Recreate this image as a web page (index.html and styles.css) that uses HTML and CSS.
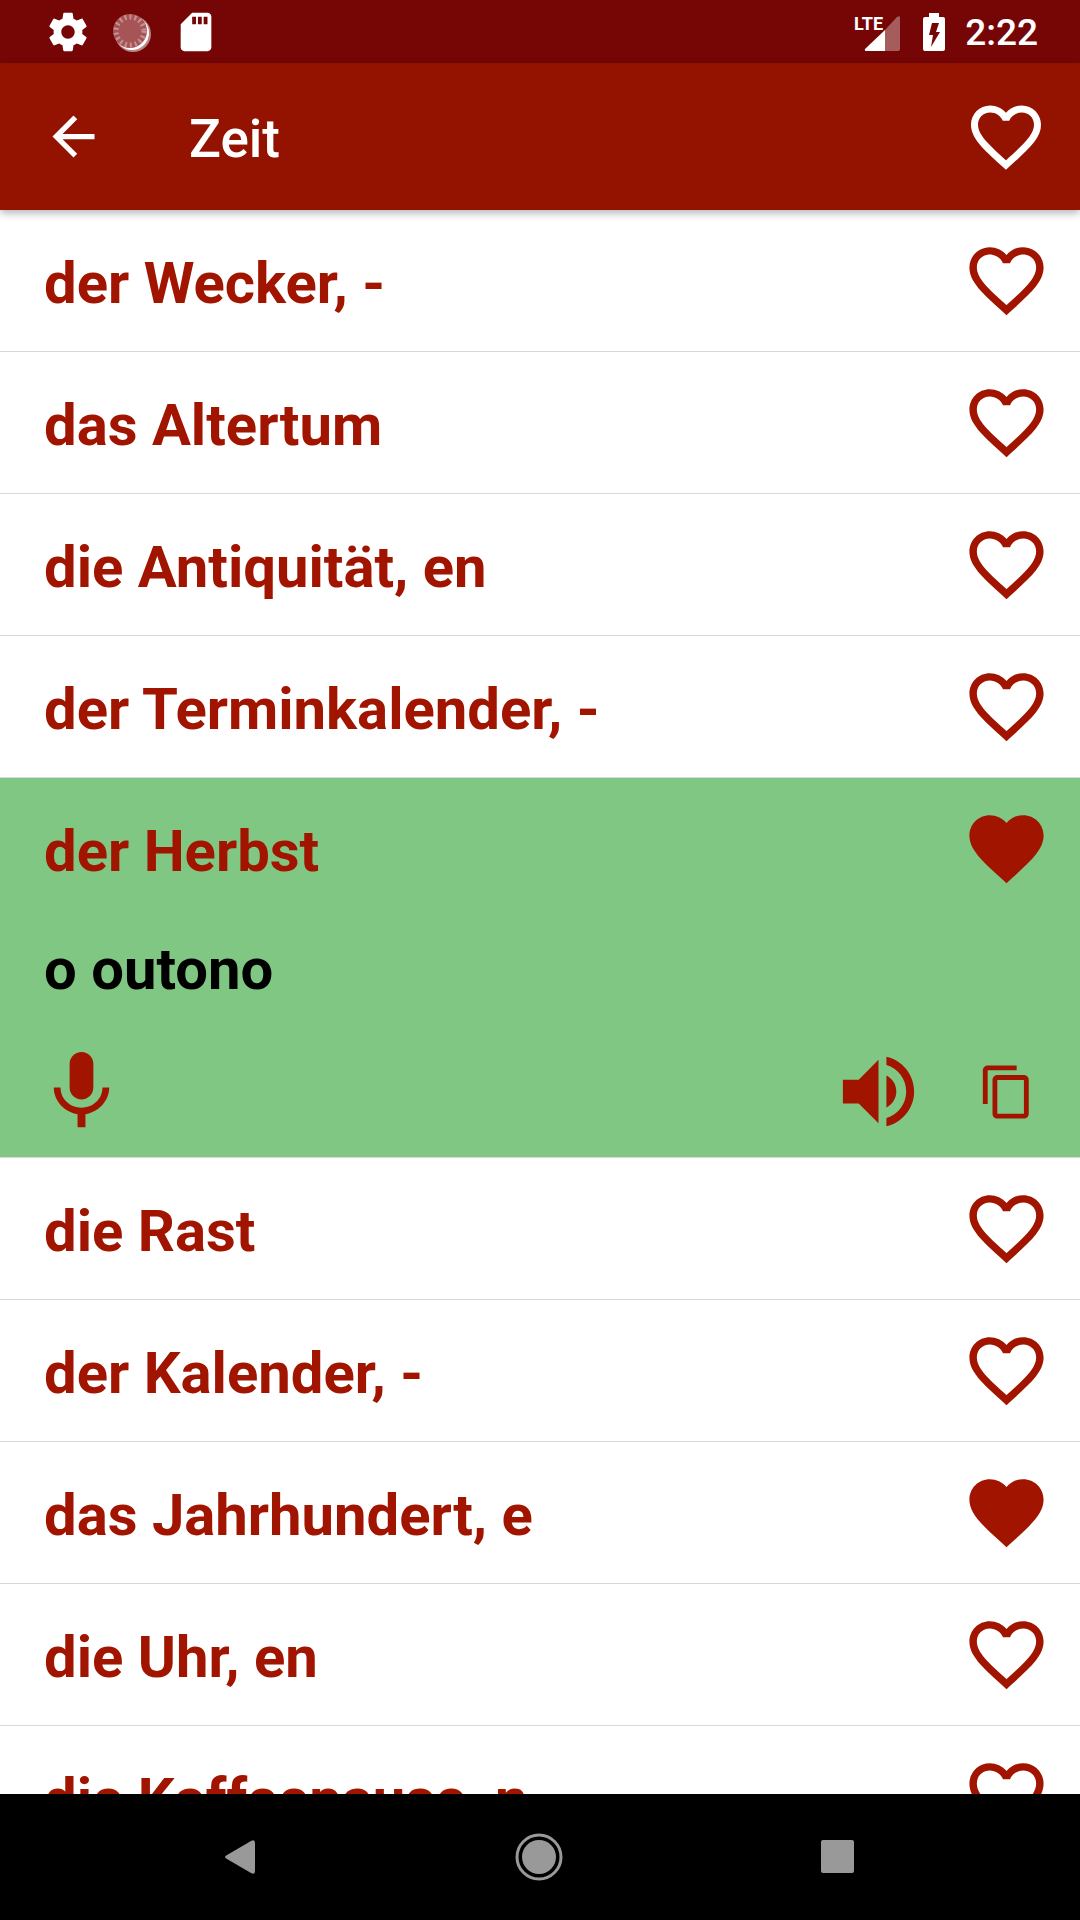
FILE: index.html
```html
<!DOCTYPE html>
<html lang="de">
<head>
<meta charset="utf-8">
<meta name="viewport" content="width=device-width, initial-scale=1">
<title>Zeit</title>
<link rel="stylesheet" href="styles.css">
</head>
<body>
<svg class="symbols" aria-hidden="true">
  <symbol id="heart-outline" viewBox="0 0 24 24"><path d="M16.5 3c-1.74 0-3.41.81-4.5 2.09C10.91 3.81 9.24 3 7.5 3 4.42 3 2 5.42 2 8.5c0 3.78 3.4 6.86 8.55 11.54L12 21.35l1.45-1.32C18.6 15.36 22 12.28 22 8.5 22 5.42 19.58 3 16.5 3zm-4.4 15.55l-.1.1-.1-.1C7.14 14.24 4 11.39 4 8.5 4 6.5 5.5 5 7.5 5c1.54 0 3.04.99 3.57 2.36h1.87C13.46 5.99 14.96 5 16.5 5c2 0 3.5 1.5 3.5 3.5 0 2.89-3.14 5.74-7.9 10.05z"/></symbol>
  <symbol id="heart" viewBox="0 0 24 24"><path d="M12 21.35l-1.45-1.32C5.4 15.36 2 12.28 2 8.5 2 5.42 4.42 3 7.5 3c1.74 0 3.41.81 4.5 2.09C13.09 3.81 14.76 3 16.5 3 19.58 3 22 5.42 22 8.5c0 3.78-3.4 6.86-8.55 11.54L12 21.35z"/></symbol>
</svg>
<div class="screen">
  <div class="status">
    <div class="status-group">
      <svg class="status-icon" viewBox="0 0 24 24" aria-hidden="true"><path d="M19.43 12.98c.04-.32.07-.64.07-.98s-.03-.66-.07-.98l2.11-1.65c.19-.15.24-.42.12-.64l-2-3.46c-.12-.22-.39-.3-.61-.22l-2.49 1c-.52-.4-1.08-.73-1.69-.98l-.38-2.65C14.46 2.18 14.25 2 14 2h-4c-.25 0-.46.18-.49.42l-.38 2.65c-.61.25-1.17.59-1.69.98l-2.49-1c-.23-.09-.49 0-.61.22l-2 3.46c-.13.22-.07.49.12.64l2.11 1.65c-.04.32-.07.65-.07.98s.03.66.07.98l-2.11 1.65c-.19.15-.24.42-.12.64l2 3.46c.12.22.39.3.61.22l2.49-1c.52.4 1.08.73 1.69.98l.38 2.65c.03.24.24.42.49.42h4c.25 0 .46-.18.49-.42l.38-2.65c.61-.25 1.17-.59 1.69-.98l2.49 1c.23.09.49 0 .61-.22l2-3.46c.12-.22.07-.49-.12-.64l-2.11-1.65zM12 15.5c-1.93 0-3.500-1.570-3.500-3.500s1.570-3.500 3.500-3.500 3.500 1.570 3.500 3.500-1.570 3.500-3.500 3.500z"/></svg>
      <svg class="status-icon" viewBox="0 0 46 46" aria-hidden="true">
        <circle cx="24" cy="25" r="18" opacity=".5"/>
        <circle cx="23" cy="24" r="17"/>
        <circle cx="21" cy="22" r="17" fill="#a65456"/>
        <circle class="dial" cx="21" cy="22" r="14"/>
      </svg>
      <svg class="status-icon" viewBox="0 0 24 24" aria-hidden="true"><path d="M18 2h-8L4.020 8 4 20c0 1.100.9 2 2 2h12c1.100 0 2-.9 2-2V4c0-1.100-.9-2-2-2zm-6 6h-2V4h2v4zm3 0h-2V4h2v4zm3 0h-2V4h2v4z"/></svg>
    </div>
    <div class="status-group">
      <svg class="signal" viewBox="0 0 48 46" aria-hidden="true">
        <path d="M46 9v31a2 2 0 0 1-2 2H31V21L43 8q3-2 3 1z" opacity=".35"/>
        <path d="M31 21v21H13q-3 0-2-2z"/>
        <text class="lte" x="0" y="21">LTE</text>
      </svg>
      <svg class="battery" viewBox="0 0 27 46" aria-hidden="true"><path fill-rule="evenodd" d="M9 4h10v4h4q2 0 2 2v30q0 2-2 2H5q-2 0-2-2V10q0-2 2-2h4zM12 14L9 26h4l-2 12 9-15h-4l3-9z"/></svg>
      <time class="clock">2:22</time>
    </div>
  </div>
  <header class="appbar">
    <button class="back" aria-label="Zurück"><svg viewBox="0 0 24 24"><path d="M20 11H7.830l5.590-5.590L12 4l-8 8 8 8 1.410-1.410L7.830 13H20v-2z"/></svg></button>
    <h1 class="title">Zeit</h1>
    <button class="appbar-fav" aria-label="Favoriten"><svg><use href="#heart-outline"/></svg></button>
  </header>
  <ul class="list">
    <li class="item"><div class="row"><span class="word">der Wecker, -</span><button class="fav" aria-label="Favorit"><svg><use href="#heart-outline"/></svg></button></div></li>
    <li class="item"><div class="row"><span class="word">das Altertum</span><button class="fav" aria-label="Favorit"><svg><use href="#heart-outline"/></svg></button></div></li>
    <li class="item"><div class="row"><span class="word">die Antiquität, en</span><button class="fav" aria-label="Favorit"><svg><use href="#heart-outline"/></svg></button></div></li>
    <li class="item"><div class="row"><span class="word">der Terminkalender, -</span><button class="fav" aria-label="Favorit"><svg><use href="#heart-outline"/></svg></button></div></li>
    <li class="item item-open">
      <div class="row"><span class="word">der Herbst</span><button class="fav" aria-label="Favorit"><svg><use href="#heart"/></svg></button></div>
      <p class="word translation" lang="pt">o outono</p>
      <div class="tools">
        <button class="tool" aria-label="Aufnehmen"><svg viewBox="0 0 24 24"><path d="M12 14c1.660 0 2.990-1.340 2.990-3L15 5c0-1.660-1.340-3-3-3S9 3.340 9 5v6c0 1.660 1.340 3 3 3zm5.300-3c0 3-2.540 5.100-5.300 5.100S6.700 14 6.700 11H5c0 3.410 2.720 6.230 6 6.720V21h2v-3.280c3.280-.48 6-3.300 6-6.720h-1.700z"/></svg></button>
        <button class="tool tool-sound" aria-label="Anhören"><svg viewBox="0 0 24 24"><path d="M3 9v6h4l5 5V4L7 9H3zm13.500 3c0-1.770-1.020-3.290-2.500-4.030v8.050c1.480-.73 2.500-2.250 2.500-4.020zM14 3.230v2.060c2.890.86 5 3.540 5 6.710s-2.110 5.850-5 6.710v2.060c4.010-.91 7-4.490 7-8.770s-2.990-7.860-7-8.770z"/></svg></button>
        <button class="tool tool-copy" aria-label="Kopieren"><svg viewBox="0 0 24 24"><path d="M16 1H4c-1.100 0-2 .9-2 2v14h2V3h12V1zm3 4H8c-1.100 0-2 .9-2 2v14c0 1.100.9 2 2 2h11c1.100 0 2-.9 2-2V7c0-1.100-.9-2-2-2zm0 16H8V7h11v14z"/></svg></button>
      </div>
    </li>
    <li class="item"><div class="row"><span class="word">die Rast</span><button class="fav" aria-label="Favorit"><svg><use href="#heart-outline"/></svg></button></div></li>
    <li class="item"><div class="row"><span class="word">der Kalender, -</span><button class="fav" aria-label="Favorit"><svg><use href="#heart-outline"/></svg></button></div></li>
    <li class="item"><div class="row"><span class="word">das Jahrhundert, e</span><button class="fav" aria-label="Favorit"><svg><use href="#heart"/></svg></button></div></li>
    <li class="item"><div class="row"><span class="word">die Uhr, en</span><button class="fav" aria-label="Favorit"><svg><use href="#heart-outline"/></svg></button></div></li>
    <li class="item"><div class="row"><span class="word">die Kaffeepause, n</span><button class="fav" aria-label="Favorit"><svg><use href="#heart-outline"/></svg></button></div></li>
  </ul>
  <nav class="navbar">
    <button aria-label="Zurück"><svg viewBox="0 0 48 48"><path d="M11 22L35 8q4-2 4 2v28q0 4-4 2L11 26q-4-2 0-4z"/></svg></button>
    <button aria-label="Startseite"><svg viewBox="0 0 48 48"><circle class="ring" cx="24" cy="24" r="22"/><circle cx="24" cy="24" r="17"/></svg></button>
    <button aria-label="Übersicht"><svg viewBox="0 0 48 48"><rect x="7" y="7" width="33" height="33" rx="2"/></svg></button>
  </nav>
</div>
</body>
</html>
```

FILE: styles.css
```css
* { box-sizing: border-box; }

body {
  margin: 0;
  font-family: Roboto, "Noto Sans", sans-serif;
  background: #fff;
  color: #a11400;
}

button {
  display: flex;
  align-items: center;
  justify-content: center;
  padding: 0;
  border: 0;
  background: none;
  color: inherit;
  cursor: pointer;
}

svg {
  display: block;
  fill: currentColor;
}

.symbols {
  position: absolute;
  width: 0;
  height: 0;
}

.screen {
  display: flex;
  flex-direction: column;
  height: 100vh;
}

/* System status bar */
.status {
  display: flex;
  flex: none;
  align-items: center;
  justify-content: space-between;
  height: 63px;
  padding: 0 42px 0 45px;
  background: #760606;
  color: #fff;
}

.status-group {
  display: flex;
  align-items: center;
  gap: 18px;
}

.status-icon {
  width: 46px;
  height: 46px;
}

.dial {
  fill: none;
  stroke: #c79294;
  stroke-width: 5;
  stroke-dasharray: 2 3;
}

.signal {
  width: 48px;
  height: 46px;
}

.battery {
  width: 27px;
  height: 46px;
}

.lte {
  font-family: "Liberation Sans Narrow", Roboto, sans-serif;
  font-size: 18px;
  font-weight: 700;
}

.clock {
  padding-top: 2px;
  font-size: 37px;
  font-weight: 500;
  line-height: 44px;
}

/* App bar */
.appbar {
  position: relative;
  display: flex;
  flex: none;
  align-items: center;
  height: 147px;
  padding: 0 32px 0 42px;
  background: #931300;
  color: #fff;
  box-shadow: 0 3px 8px rgba(0, 0, 20, 0.3);
}

.back svg {
  width: 63px;
  height: 63px;
}

.title {
  flex: 1;
  margin: 0;
  padding: 4px 0 0 84px;
  font-size: 53px;
  font-weight: 500;
  line-height: 64px;
}

.appbar-fav svg {
  width: 84px;
  height: 84px;
}

/* Vocabulary list */
.list {
  flex: 1;
  min-height: 0;
  margin: 0;
  padding: 0;
  overflow: hidden;
  list-style: none;
}

.item {
  border-bottom: 1px solid #d8d8d8;
}

.item-open {
  background: #81c784;
}

.row {
  display: flex;
  align-items: center;
  justify-content: space-between;
  height: 141px;
  padding: 0 29px 0 44px;
}

.word {
  padding-top: 4px;
  font-size: 58px;
  font-weight: 700;
  line-height: 68px;
}

.fav svg {
  width: 89px;
  height: 89px;
}

.translation {
  margin: 0;
  padding: 16px 44px 0;
  color: #000;
}

.tools {
  display: flex;
  align-items: center;
  padding: 41px 44px 18px 34px;
}

.tool svg {
  width: 95px;
  height: 95px;
}

.tool-sound {
  margin-left: auto;
}

.tool-copy {
  margin-left: 52px;
}

.tool-copy svg {
  width: 58px;
  height: 58px;
}

/* System navigation bar */
.navbar {
  display: flex;
  flex: none;
  height: 126px;
  padding: 0 93px 0 91px;
  background: #000;
  color: #999;
}

.navbar button {
  flex: 1;
}

.navbar svg {
  width: 48px;
  height: 48px;
}

.ring {
  fill: none;
  stroke: currentColor;
  stroke-width: 3;
}
```
